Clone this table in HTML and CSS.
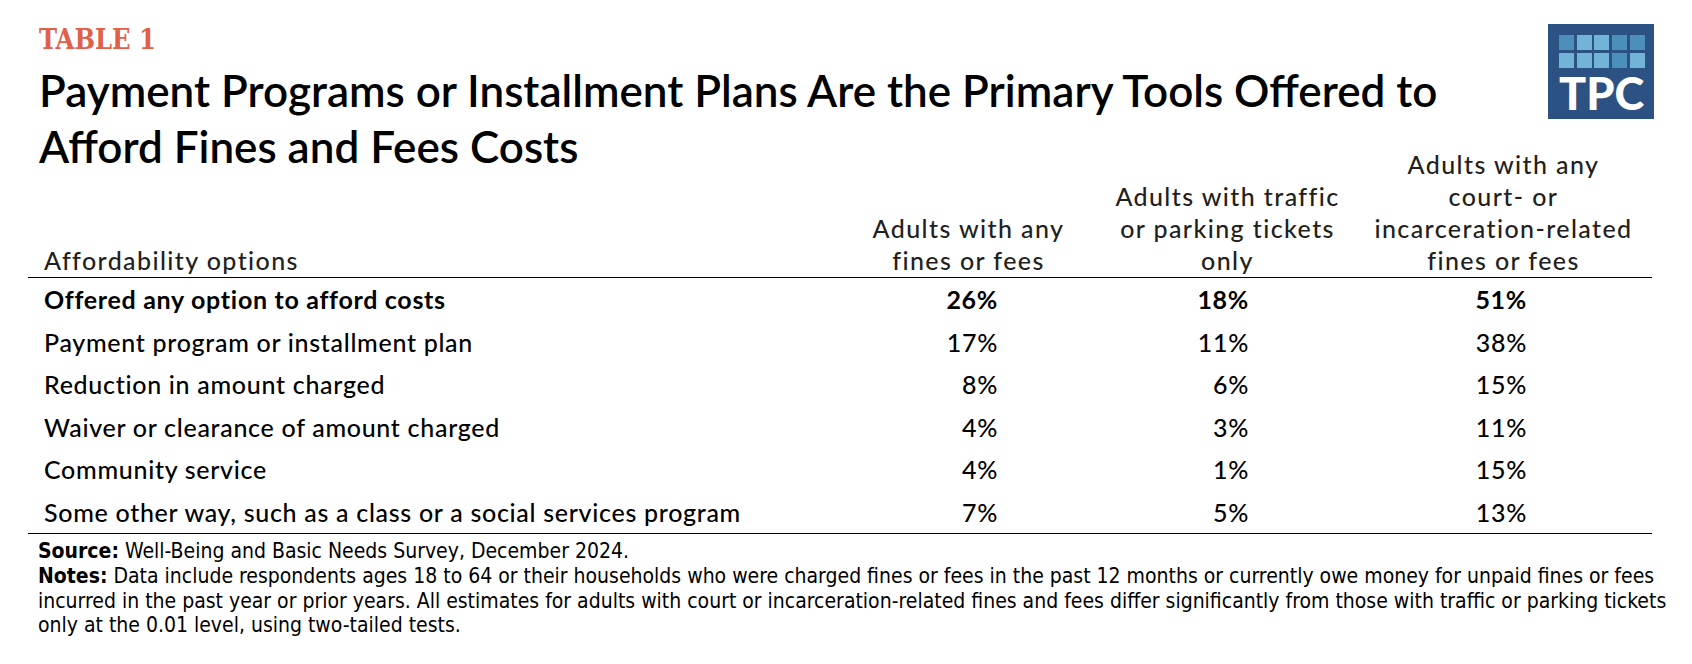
FILE: index.html
```html
<!DOCTYPE html>
<html lang="en">
<head>
<meta charset="utf-8">
<title>Table 1</title>
<link rel="stylesheet" href="styles.css">
</head>
<body>
<div class="page">
  <header class="top">
    <div class="heading">
      <div class="label">TABLE 1</div>
      <h1 class="title"><span class="tline">Payment Programs or Installment Plans Are the Primary Tools Offered to</span> <span class="tline">Afford Fines and Fees Costs</span></h1>
    </div>
    <div class="logo">
      <div class="squares">
        <span class="sq mid"></span><span class="sq light"></span><span class="sq light"></span><span class="sq mid"></span><span class="sq mid"></span>
        <span class="sq light"></span><span class="sq light"></span><span class="sq light"></span><span class="sq mid"></span><span class="sq light"></span>
      </div>
      <div class="tpc">TPC</div>
    </div>
  </header>

  <table class="data">
    <colgroup>
      <col class="w-label"><col class="w-c1"><col class="w-c2"><col class="w-c3">
    </colgroup>
    <thead>
      <tr>
        <th class="lab">Affordability options</th>
        <th class="col">Adults with any<br>fines or fees</th>
        <th class="col">Adults with traffic<br>or parking tickets<br>only</th>
        <th class="col">Adults with any<br>court- or<br>incarceration-related<br>fines or fees</th>
      </tr>
    </thead>
    <tbody>
      <tr class="strong">
        <td class="lab">Offered any option to afford costs</td>
        <td class="n1">26%</td><td class="n2">18%</td><td class="n3">51%</td>
      </tr>
      <tr>
        <td class="lab">Payment program or installment plan</td>
        <td class="n1">17%</td><td class="n2">11%</td><td class="n3">38%</td>
      </tr>
      <tr>
        <td class="lab">Reduction in amount charged</td>
        <td class="n1">8%</td><td class="n2">6%</td><td class="n3">15%</td>
      </tr>
      <tr>
        <td class="lab">Waiver or clearance of amount charged</td>
        <td class="n1">4%</td><td class="n2">3%</td><td class="n3">11%</td>
      </tr>
      <tr>
        <td class="lab">Community service</td>
        <td class="n1">4%</td><td class="n2">1%</td><td class="n3">15%</td>
      </tr>
      <tr>
        <td class="lab">Some other way, such as a class or a social services program</td>
        <td class="n1">7%</td><td class="n2">5%</td><td class="n3">13%</td>
      </tr>
    </tbody>
  </table>

  <div class="notes">
    <p><b>Source:</b> Well-Being and Basic Needs Survey, December 2024.</p>
    <p><b>Notes:</b> Data include respondents ages 18 to 64 or their households who were charged fines or fees in the past 12 months or currently owe money for unpaid fines or fees incurred in the past year or prior years. All estimates for adults with court or incarceration-related fines and fees differ significantly from those with traffic or parking tickets only at the 0.01 level, using two-tailed tests.</p>
  </div>
</div>
</body>
</html>
```
FILE: styles.css
```css
html, body {
  margin: 0;
  padding: 0;
  background: #ffffff;
}

.page {
  width: 1692px;
  height: 664px;
  overflow: hidden;
  font-family: "Lato", "Noto Sans", sans-serif;
  color: #000;
}

.top {
  display: flex;
  justify-content: space-between;
  align-items: flex-start;
  padding: 0 38px 0 39px;
}

.heading {
  padding-top: 26px;
}

.label {
  font-family: "DejaVu Serif", serif;
  font-weight: 700;
  font-stretch: condensed;
  font-size: 27px;
  line-height: 28px;
  color: #e0604a;
  letter-spacing: 0px;
}

.title {
  margin: 8px 0 0;
  font-size: 44px;
  line-height: 56px;
  font-weight: 600;
}

.tline {
  display: block;
  width: fit-content;
}

.logo {
  margin-top: 24px;
  width: 106px;
  height: 95px;
  background: #2b5283;
  box-sizing: border-box;
  padding: 11px 9px 0 11px;
}

.squares {
  display: grid;
  grid-template-columns: repeat(5, 15px);
  grid-auto-rows: 15px;
  column-gap: 2.7px;
  row-gap: 3px;
}

.sq.mid { background: #4b8fba; }
.sq.light { background: #72b4d8; }

.tpc {
  margin-top: 5px;
  color: #fff;
  font-family: "Lato", sans-serif;
  font-weight: 900;
  font-size: 45px;
  line-height: 40px;
  letter-spacing: 0px;
}

.data {
  margin: -26px 0 0 28px;
  border-collapse: collapse;
  table-layout: fixed;
  width: 1624px;
  font-size: 25px;
}

.w-label { width: 809px; }
.w-c1 { width: 263px; }
.w-c2 { width: 255px; }
.w-c3 { width: 297px; }

.data thead th {
  font-weight: 500;
  color: #231f20;
  line-height: 32px;
  letter-spacing: 1.4px;
  vertical-align: bottom;
  padding: 0 0 1px;
  border-bottom: 1.5px solid #000;
}

.data th.lab {
  text-align: left;
  padding-left: 16px;
}

.data th.col {
  text-align: center;
}

.data td {
  padding: 0;
  height: 42.5px;
  line-height: 42px;
  font-weight: 500;
  letter-spacing: 0.7px;
  white-space: nowrap;
}

.data tbody tr:last-child td {
  border-bottom: 1.5px solid #000;
}

.data td.lab {
  padding-left: 16px;
}

.data td.n1 { text-align: right; padding-right: 102px; }
.data td.n2 { text-align: right; padding-right: 106px; }
.data td.n3 { text-align: right; padding-right: 125px; }

.data tr.strong td {
  font-weight: 700;
  letter-spacing: 0.7px;
}

.notes {
  margin-top: 5px;
  padding: 0 20px 0 38px;
  font-family: "DejaVu Sans", sans-serif;
  font-stretch: condensed;
  font-size: 21px;
  line-height: 24.8px;
  color: #000;
}

.notes p {
  margin: 0;
}

.notes b {
  font-weight: 700;
}
```
